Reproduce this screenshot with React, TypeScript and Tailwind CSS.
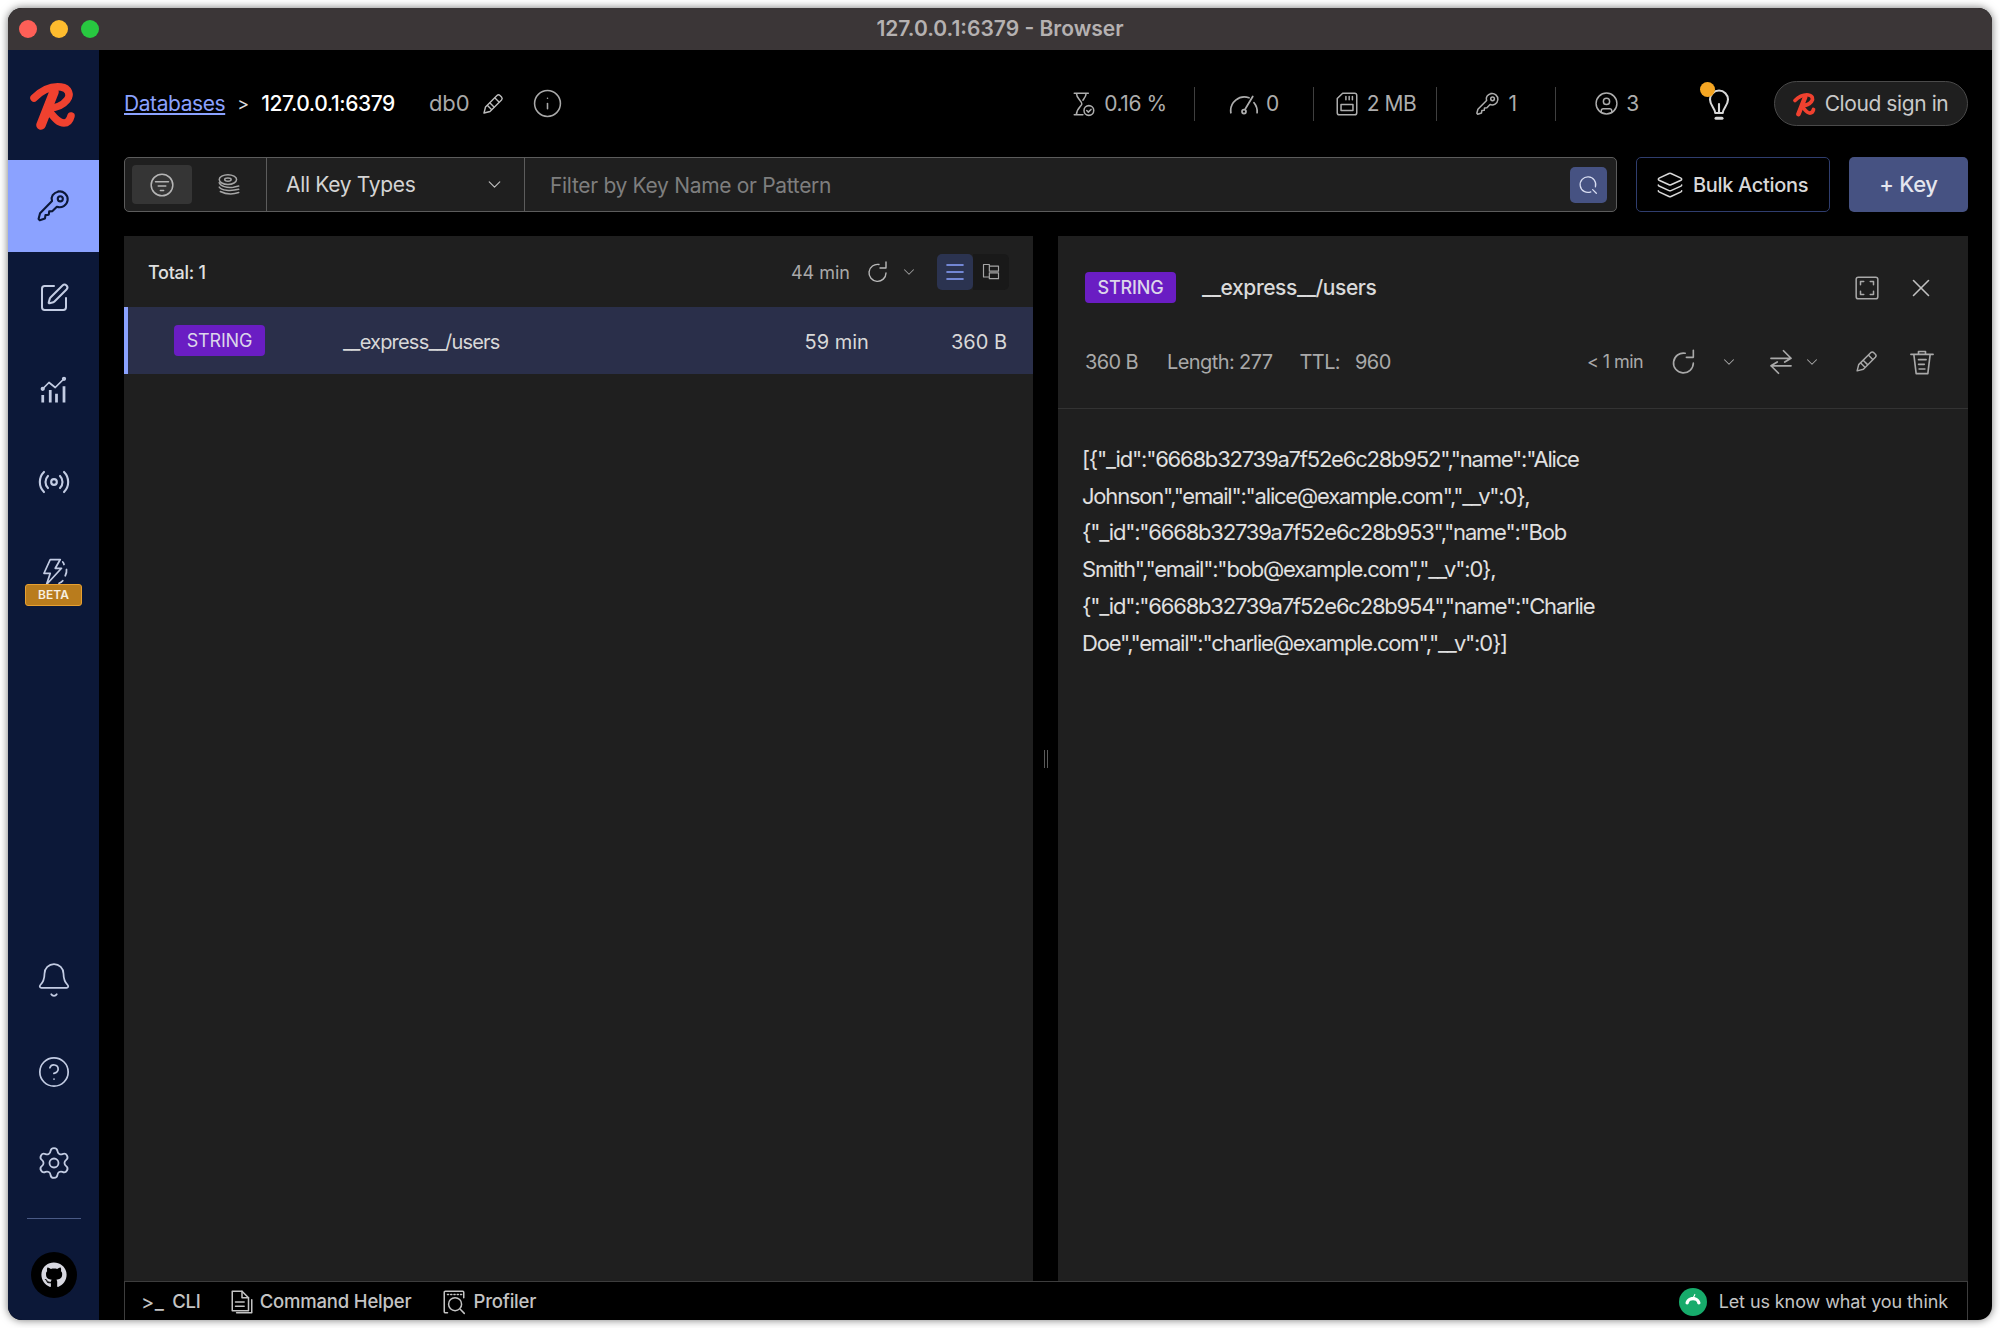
import {
  Bell,
  ChevronDown,
  CircleHelp,
  CircleUser,
  Info,
  Layers,
  Menu,
  Radio,
  Settings,
  SquarePen,
  X,
} from "lucide-react";
import { FaGithub } from "react-icons/fa6";

type IconProps = { className?: string };

const Svg = ({ className, children }: IconProps & { children: React.ReactNode }) => (
  <svg viewBox="0 0 24 24" fill="none" stroke="currentColor" strokeWidth={1.4} strokeLinecap="round" strokeLinejoin="round" className={className}>
    {children}
  </svg>
);

const KeyIcon = ({ className }: IconProps) => (
  <Svg className={className}>
    <path d="M14.5 2.5c3.5-1 7 2 6.6 5.6-.4 3.4-4 5.600-7.200 4.400L11 15.400l-2.200.2-.3 2.200-2.200.3-.3 2.200-3.500 1.200-.8-.9 1-3.700 8-8.200c-1-2.900.700-5.400 4.300-6.400z" />
    <circle cx="16.200" cy="7.200" r="1.700" />
  </Svg>
);

const ChartIcon = ({ className }: IconProps) => (
  <Svg className={className}>
    <path d="M3 11l5-5 5 4 7-7" />
    <circle cx="3" cy="11" r="1" />
    <circle cx="20" cy="3" r="1" />
    <path d="M3 16v6M9 12v10M14 15v7M20 9v13" strokeWidth={2.200} strokeLinecap="butt" />
  </Svg>
);

const BoltIcon = ({ className }: IconProps) => (
  <Svg className={className}>
    <path d="M9 2h8l-4 7h5L6 22l3-9H4l5-11z" />
    <path d="M19 4a4 4 0 0 1 1 2M22 10a8 8 0 0 1-1 5M19 19a6 6 0 0 1-3 2" />
  </Svg>
);

const Logo = ({ className }: IconProps) => (
  <svg viewBox="12 12 48 52" fill="none" stroke="#f0412f" strokeLinecap="round" className={className}>
    <path d="M18 31C26 23 36 19 45 20C53 21 55 28 51 33C47 38 40 41 33 41" strokeWidth={7.500} />
    <path d="M38 25L25 58" strokeWidth={9.500} />
    <path d="M33 44C38 50 42 56 48 56C52 56 54 53 55 49" strokeWidth={7.500} />
  </svg>
);

const SearchIcon = ({ className }: IconProps) => (
  <Svg className={className}>
    <path d="M14 19.500A8.500 8.500 0 1 1 19 14" />
    <path d="M16 17l4 4" />
  </Svg>
);

const FilterIcon = ({ className }: IconProps) => (
  <Svg className={className}>
    <circle cx="12" cy="12" r="10" />
    <path d="M6 9h12M8.500 13h7M10.500 17h3" />
  </Svg>
);

const SearchLayersIcon = ({ className }: IconProps) => (
  <Svg className={className}>
    <ellipse cx="11" cy="7" rx="8" ry="4.500" />
    <ellipse cx="11" cy="7" rx="3" ry="1.500" />
    <path d="M3 10c1 3 7 5 13 4l5-1M3 14c2 3 10 4 18 2M4 18c4 2 11 3 17 1" />
  </Svg>
);

const HourglassIcon = ({ className }: IconProps) => (
  <Svg className={className}>
    <path d="M3 2h13M3 22h8M5 2c0 5 5 7 5 10 0 2-5 4-5 10M14 2c0 3-2 5-3 6.500" />
    <circle cx="16.500" cy="18" r="4.500" />
    <path d="M14.500 18l1.500 1.500 2.500-2.500" />
  </Svg>
);

const GaugeIcon = ({ className }: IconProps) => (
  <Svg className={className}>
    <path d="M1.500 19A11 11 0 0 1 16 7" />
    <path d="M20 11a11 11 0 0 1 2.500 8" />
    <path d="M19 6l-6 10" />
    <circle cx="12" cy="18" r="1.600" />
  </Svg>
);

const MemoryIcon = ({ className }: IconProps) => (
  <Svg className={className}>
    <path d="M8 2h11a2 2 0 0 1 2 2v16a2 2 0 0 1-2 2H5a2 2 0 0 1-2-2V7z" />
    <path d="M11 5v3M14 5v3M17 5v3" />
    <rect x="6.500" y="12.500" width="11" height="5.500" />
  </Svg>
);

const BulbIcon = ({ className }: IconProps) => (
  <Svg className={className}>
    <path d="M9.500 18c0-3-3.500-5-3.500-9a6 6 0 0 1 12 0c0 4-3.500 6-3.500 9z" />
    <path d="M12 18v-6" />
    <path d="M10 21.500h4" strokeWidth={2} />
  </Svg>
);

const ExpandIcon = ({ className }: IconProps) => (
  <Svg className={className}>
    <rect x="2" y="2" width="20" height="20" rx="2" />
    <path d="M6 9V6h3M15 6h3v3M18 15v3h-3M9 18H6v-3" />
  </Svg>
);

const RefreshIcon = ({ className }: IconProps) => (
  <Svg className={className}>
    <path d="M13 4.500A8.500 8.500 0 1 0 20 13" />
    <path d="M20 2v6h-6" />
  </Svg>
);

const PencilIcon = ({ className }: IconProps) => (
  <Svg className={className}>
    <path d="M3 21l1.500-6L16 3.500a2.200 2.200 0 0 1 3 0l1.500 1.500a2.200 2.200 0 0 1 0 3L9 19.500z" />
    <path d="M6.500 13.500l4 4M14 6l4 4M9 11l4 4" />
  </Svg>
);

const SwapIcon = ({ className }: IconProps) => (
  <Svg className={className}>
    <path d="M4 9h16M14 3l6 6-5 3M20 15H4M10 21l-6-6 5-3" />
  </Svg>
);

const TrashIcon = ({ className }: IconProps) => (
  <Svg className={className}>
    <path d="M2.500 5.500h19M9 5.500V3h6v2.500M5 5.500l2 16.500h10l2-16.500M9 10h6.500M9 14h5M9.500 18h5" />
  </Svg>
);

const TreeIcon = ({ className }: IconProps) => (
  <Svg className={className}>
    <path d="M3 3h7v2h11v6H10V5M3 3v15h7M10 13h11v7H10z" />
  </Svg>
);

const DocIcon = ({ className }: IconProps) => (
  <Svg className={className}>
    <path d="M3 2h9l6 6v12H3z" />
    <path d="M12 2v6h6M6 12h8M6 16h8M21 10v12H7" />
  </Svg>
);

const ProfilerIcon = ({ className }: IconProps) => (
  <Svg className={className}>
    <path d="M6 22H4a1 1 0 0 1-1-1V3a1 1 0 0 1 1-1h16a1 1 0 0 1 1 1v5" />
    <path d="M6 5h13" strokeDasharray="1 2" />
    <circle cx="13" cy="14" r="6" />
    <path d="M18 19l3.500 3.500" />
  </Svg>
);

const Badge = () => (
  <span className="flex h-[31px] w-[91px] items-center justify-center rounded-[4px] bg-[#6a1dc3] text-[18px] tracking-[-0.01em] text-[#dcd6ea]">
    STRING
  </span>
);

const jsonLines = [
  '[{"_id":"6668b32739a7f52e6c28b952","name":"Alice',
  'Johnson","email":"alice@example.com","__v":0},',
  '{"_id":"6668b32739a7f52e6c28b953","name":"Bob',
  'Smith","email":"bob@example.com","__v":0},',
  '{"_id":"6668b32739a7f52e6c28b954","name":"Charlie',
  'Doe","email":"charlie@example.com","__v":0}]',
];

const Stat = ({ icon, value, className }: { icon: React.ReactNode; value: string; className: string }) => (
  <div className={`flex h-[34px] items-center justify-center gap-[7px] ${className}`}>
    {icon}
    <span>{value}</span>
  </div>
);

const App = () => {
  return (
    <div className="h-[1328px] w-[2000px] overflow-hidden bg-white p-[8px] font-[Inter,sans-serif]">
      <div className="flex h-[1312px] w-[1984px] flex-col overflow-hidden rounded-[14px] bg-black text-[#dcdcdc] shadow-[0_0_8px_rgba(0,0,0,0.55)]">
        {/* title bar */}
        <div className="relative flex h-[42px] shrink-0 items-center justify-center bg-[#3b3637] text-[21px] font-semibold text-[#b5b1b1]">
          <div className="absolute left-[11px] top-[12px] flex gap-[13px]">
            <span className="size-[18px] rounded-full bg-[#fe5f57]" />
            <span className="size-[18px] rounded-full bg-[#febc2e]" />
            <span className="size-[18px] rounded-full bg-[#28c840]" />
          </div>
          127.0.0.1:6379 - Browser
        </div>

        <div className="flex min-h-0 flex-1">
          {/* sidebar */}
          <aside className="flex w-[91px] shrink-0 flex-col items-center bg-[#0c1838] text-[#c3cce3]">
            <div className="flex h-[110px] w-full items-center justify-center pr-[3px]">
              <Logo className="h-[52px] w-[48px]" />
            </div>
            <div className="flex h-[92px] w-full items-center justify-center bg-[#8ba2ff] text-[#0c1838]">
              <KeyIcon className="size-[36px]" />
            </div>
            <div className="flex h-[92px] w-full items-center justify-center">
              <SquarePen className="size-[32px]" strokeWidth={1.500} />
            </div>
            <div className="flex h-[92px] w-full items-center justify-center">
              <ChartIcon className="size-[30px]" />
            </div>
            <div className="flex h-[91px] w-full items-center justify-center">
              <Radio className="size-[34px]" strokeWidth={1.500} />
            </div>
            <div className="flex flex-col items-center pt-[30px]">
              <BoltIcon className="size-[30px]" />
              <span className="-mt-[3px] flex h-[22px] w-[57px] items-center justify-center rounded-[3px] border border-[#e8a030] bg-[#b97c1d] text-[12px] font-semibold text-[#f7efe0]">
                BETA
              </span>
            </div>
            <div className="mt-auto flex h-[92px] w-full items-center justify-center">
              <Bell className="size-[38px]" strokeWidth={1.100} />
            </div>
            <div className="flex h-[91px] w-full items-center justify-center">
              <CircleHelp className="size-[34px]" strokeWidth={1.200} />
            </div>
            <div className="flex h-[92px] w-full items-center justify-center">
              <Settings className="size-[36px]" strokeWidth={1.200} />
            </div>
            <div className="mt-[9px] h-px w-[54px] bg-[#4a5a85]" />
            <div className="mb-[22px] mt-[33px] flex size-[46px] items-center justify-center rounded-full bg-black text-[#d8d8e0]">
              <FaGithub className="size-[26px]" />
            </div>
          </aside>

          {/* main */}
          <main className="flex min-w-0 flex-1 flex-col pl-[25px] pr-[24px]">
            <header className="flex h-[107px] shrink-0 items-center justify-between">
              <div className="flex items-center text-[21px]">
                <span className="tracking-[-0.02em] text-[#8ba2ff] underline">Databases</span>
                <span className="ml-[12px] text-[18px]">&gt;</span>
                <span className="ml-[12px] font-medium tracking-[-0.02em] text-white">127.0.0.1:6379</span>
                <span className="ml-[34px] text-[22px] text-[#a9a9a9]">db0</span>
                <PencilIcon className="ml-[11px] size-[24px] text-[#bdbdbd]" />
                <Info className="ml-[27px] size-[31px] text-[#a9a9a9]" strokeWidth={1.200} />
              </div>
              <div className="flex items-center text-[21px] tracking-[-0.02em] text-[#adadad]">
                <Stat className="w-[150px]" icon={<HourglassIcon className="size-[26px]" />} value="0.16 %" />
                <div className="h-[34px] w-px bg-[#3f3f3f]" />
                <Stat className="w-[118px]" icon={<GaugeIcon className="size-[30px]" />} value="0" />
                <div className="h-[34px] w-px bg-[#3f3f3f]" />
                <Stat className="w-[122px]" icon={<MemoryIcon className="size-[26px]" />} value="2 MB" />
                <div className="h-[34px] w-px bg-[#3f3f3f]" />
                <Stat className="w-[118px]" icon={<KeyIcon className="size-[26px]" />} value="1" />
                <div className="h-[34px] w-px bg-[#3f3f3f]" />
                <Stat className="w-[124px] pr-[3px]" icon={<CircleUser className="size-[25px]" strokeWidth={1.400} />} value="3" />
                <div className="flex w-[94px] justify-center pr-[16px]">
                  <div className="relative">
                    <BulbIcon className="size-[36px] text-[#d8d8d8]" />
                    <span className="absolute -left-[1px] -top-[4px] size-[15px] rounded-full bg-[#f5a623]" />
                  </div>
                </div>
                <div className="flex h-[45px] w-[194px] items-center justify-center gap-[9px] rounded-full border border-[#4a4a4a] bg-[#1f1f1f] pr-[2px] text-[#c9c9c9]">
                  <Logo className="h-[26px] w-[24px]" />
                  Cloud sign in
                </div>
              </div>
            </header>

            {/* filter row */}
            <div className="flex h-[55px] shrink-0 items-stretch text-[21px] tracking-[-0.015em]">
              <div className="flex w-[1493px] items-stretch rounded-[5px] border border-[#5c5c5c] bg-[#1f1f1f]">
                <div className="flex w-[142px] items-center gap-[24px] border-r border-[#5c5c5c] pl-[7px]">
                  <div className="flex h-[39px] w-[60px] items-center justify-center rounded-[4px] bg-[#353535] text-[#b5b5b5]">
                    <FilterIcon className="size-[26px]" />
                  </div>
                  <SearchLayersIcon className="size-[26px] text-[#a5a5a5]" />
                </div>
                <div className="flex w-[258px] items-center justify-between border-r border-[#5c5c5c] pb-px pl-[19px] pr-[19px] text-[#d4d4d4]">
                  <span className="pt-[2px]">All Key Types</span>
                  <ChevronDown className="size-[21px] text-[#bdbdbd]" strokeWidth={1.400} />
                </div>
                <div className="flex flex-1 items-center justify-between pl-[25px] pr-[9px] text-[#7e7e7e]">
                  <span className="pt-[2px]">Filter by Key Name or Pattern</span>
                  <div className="flex h-[36px] w-[37px] items-center justify-center rounded-[5px] bg-[#465282] text-[#d7dcf0]">
                    <SearchIcon className="size-[22px]" />
                  </div>
                </div>
              </div>
              <div className="ml-[19px] flex w-[194px] items-center justify-center gap-[9px] rounded-[5px] border border-[#2f3d6e] bg-black pr-[2px] text-[20px] font-medium text-[#d8d8d8]">
                <Layers className="size-[28px]" strokeWidth={1.300} />
                Bulk Actions
              </div>
              <div className="ml-[19px] flex w-[119px] items-center justify-center rounded-[5px] bg-[#465282] text-[22px] font-medium text-[#e4e6ee]">
                + Key
              </div>
            </div>

            {/* panels */}
            <div className="mt-[24px] flex min-h-0 flex-1">
              <section className="w-[909px] shrink-0 bg-[#1f1f1f]">
                <div className="flex h-[71px] items-center pl-[24px] pr-[24px] text-[18px]">
                  <span className="pt-[2px] font-medium tracking-[-0.015em] text-[#e0e0e0]">Total: 1</span>
                  <span className="ml-auto pt-[1px] text-[#a9a9a9]">44 min</span>
                  <RefreshIcon className="ml-[16px] size-[24px] text-[#b8b8b8]" />
                  <ChevronDown className="ml-[10px] size-[18px] text-[#9a9a9a]" strokeWidth={1.400} />
                  <div className="ml-[19px] flex size-[36px] items-center justify-center rounded-[5px] bg-[#2b3350] text-[#8ba2ff]">
                    <Menu className="size-[24px]" strokeWidth={1.600} />
                  </div>
                  <div className="flex size-[36px] items-center justify-center rounded-r-[5px] bg-[#191919] text-[#a5a5a5]">
                    <TreeIcon className="size-[20px]" />
                  </div>
                </div>
                <div className="flex h-[67px] items-center border-l-[4px] border-[#8ba2ff] bg-[#2a2f4a] pl-[46px] pr-[26px] text-[20px] text-[#d8d8d8]">
                  <Badge />
                  <span className="ml-[78px] pt-[2px] tracking-[-0.04em]">__express__/users</span>
                  <span className="ml-auto pt-[2px]">59 min</span>
                  <span className="ml-[82px] pt-[2px]">360 B</span>
                </div>
              </section>

              <div className="flex w-[25px] shrink-0 items-center justify-center gap-[2px]">
                <span className="h-[18px] w-px bg-[#5a5a5a]" />
                <span className="h-[18px] w-px bg-[#5a5a5a]" />
              </div>

              <section className="flex min-w-0 flex-1 flex-col bg-[#1f1f1f]">
                <div className="flex h-[173px] shrink-0 flex-col border-b border-[#333333] pl-[27px] pr-[32px]">
                  <div className="mt-[36px] flex items-center text-[21px] font-medium text-[#dadada]">
                    <Badge />
                    <span className="ml-[26px] tracking-[-0.02em]">__express__/users</span>
                    <ExpandIcon className="ml-auto size-[26px] text-[#a9a9a9]" />
                    <X className="ml-[26px] size-[30px] text-[#c0c0c0]" strokeWidth={1.300} />
                  </div>
                  <div className="mt-[43px] flex items-center text-[20px] tracking-[-0.03em] text-[#a9a9a9]">
                    <span>360 B</span>
                    <span className="ml-[29px]">Length: 277</span>
                    <span className="ml-[27px]">TTL:</span>
                    <span className="ml-[15px]">960</span>
                    <span className="ml-auto text-[18px]">&lt; 1 min</span>
                    <RefreshIcon className="ml-[27px] size-[28px]" />
                    <ChevronDown className="ml-[22px] size-[18px]" strokeWidth={1.400} />
                    <SwapIcon className="ml-[28px] size-[30px]" />
                    <ChevronDown className="ml-[7px] size-[18px]" strokeWidth={1.400} />
                    <PencilIcon className="ml-[33px] size-[25px]" />
                    <TrashIcon className="ml-[29px] size-[28px]" />
                  </div>
                </div>
                <div className="pl-[24px] pt-[32px] text-[22px] leading-[36.7px] tracking-[-0.055em] text-[#e0e0e0]">
                  {jsonLines.map((line) => (
                    <div key={line}>{line}</div>
                  ))}
                </div>
              </section>
            </div>

            {/* bottom bar */}
            <footer className="flex h-[39px] shrink-0 items-center border-x border-t border-[#3d3d3d] pl-[16px] pr-[19px] pt-[1px] text-[18.500px] tracking-[-0.01em] text-[#c4c4c4]">
              <span className="text-[20px] tracking-[0.02em]">&gt;_</span>
              <span className="ml-[8px] font-medium">CLI</span>
              <DocIcon className="ml-[28px] size-[26px]" />
              <span className="ml-[5px] font-medium">Command Helper</span>
              <ProfilerIcon className="ml-[30px] size-[26px]" />
              <span className="ml-[6px] font-medium">Profiler</span>
              <div className="ml-auto flex size-[28px] items-center justify-center rounded-full bg-[#17ab6b]">
                <svg viewBox="0 0 24 24" className="size-[20px]" fill="white">
                  <path d="M12 6c5 0 8 3 9 7 .2 1-.7 2-2 2s-2-1-2-2c-.5-2-2.500-3-5-3s-4.500 1-5 3c0 1-.7 2-2 2s-2.200-1-2-2c1-4 4-7 9-7zM14 2l1 1-2 4-1-1z" />
                </svg>
              </div>
              <span className="ml-[12px] text-[18px] tracking-[-0.005em]">Let us know what you think</span>
            </footer>
          </main>
        </div>
      </div>
    </div>
  );
};

export default App;
